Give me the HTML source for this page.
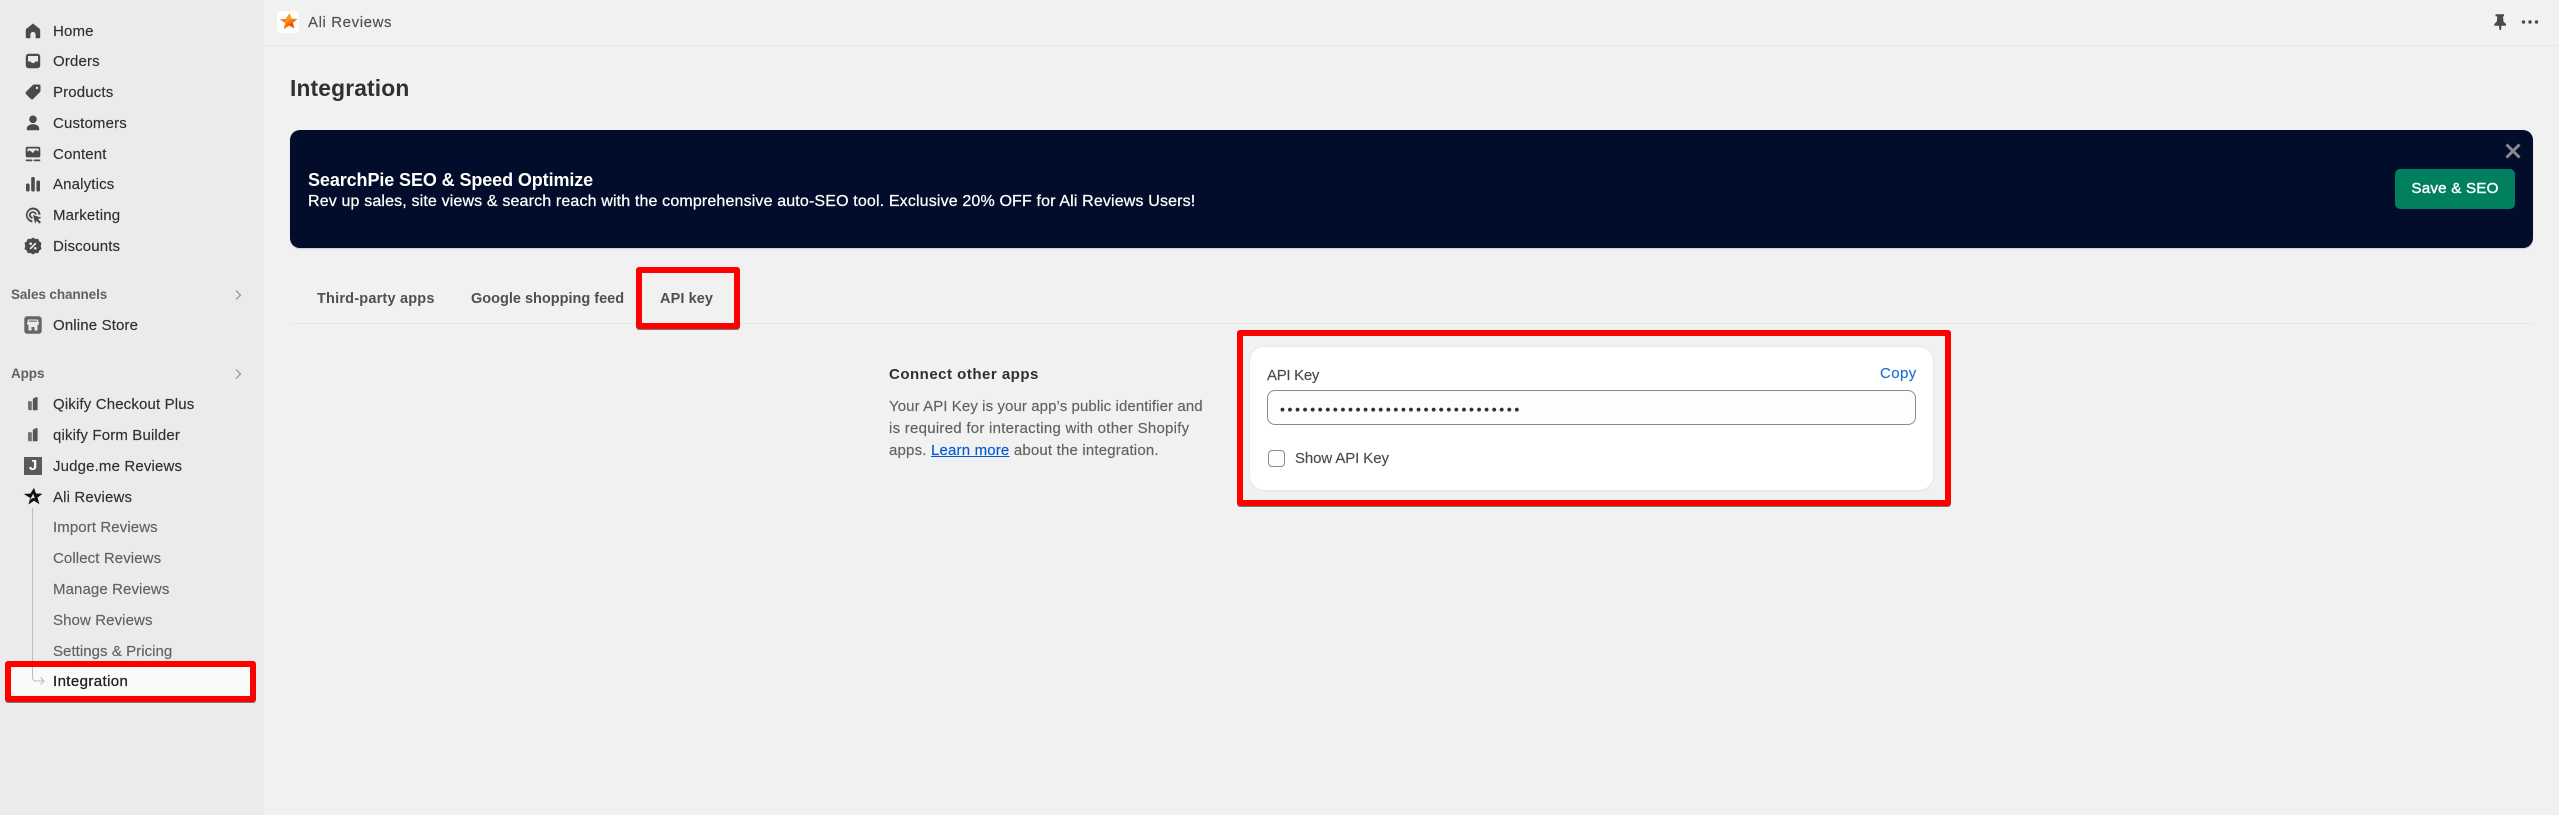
<!DOCTYPE html>
<html lang="en"><head><meta charset="utf-8"><title>Integration</title>
<style>
*{box-sizing:border-box}
html,body{margin:0;padding:0}
body{width:2559px;height:815px;overflow:hidden;background:#f1f1f1;position:relative;font-family:"Liberation Sans",sans-serif;color:#303030}
.a{position:absolute}
.t{position:absolute;white-space:nowrap;line-height:20px;height:20px;font-size:15px;letter-spacing:.15px;margin-top:1px;-webkit-text-stroke:.15px currentColor}
.n{left:53px;color:#303030}
.s{left:53px;color:#616161;letter-spacing:.1px}
.h{left:11px;color:#616161;font-weight:bold;font-size:13.500px;letter-spacing:-.1px;-webkit-text-stroke:0}
.tab{font-weight:bold;font-size:14.500px;color:#4f4f4f;letter-spacing:.1px;-webkit-text-stroke:0}
.p{left:889px;color:#616161}
svg.i{position:absolute;left:23px;width:20px;height:20px;fill:#4a4a4a}
.red{position:absolute;border:6px solid #f00;border-radius:3px;box-shadow:0 1px 0 #777}
</style></head><body>
<div class="a" style="left:0;top:0;width:264px;height:815px;background:#ebebeb"></div>
<div class="a" style="left:264px;top:45px;width:2295px;height:1px;background:#e8e8e8"></div>

<svg class="i" style="top:21px" viewBox="0 0 20 20"><path d="M10 2.500l6.600 5.200c.4.4.6.9.6 1.500V16c0 .8-.4 1.200-1.200 1.200h-3.400v-3.700a2.600 2.600 0 0 0-5.200 0v3.700H4c-.8 0-1.200-.4-1.200-1.200V9.200c0-.6.2-1.100.6-1.500z"/></svg>
<div class="t n" style="top:21px">Home</div>
<svg class="i" style="top:51px" viewBox="0 0 20 20"><path fill-rule="evenodd" d="M5.500 2.800h9a2.700 2.700 0 0 1 2.700 2.700v9a2.700 2.700 0 0 1-2.700 2.700h-9a2.700 2.700 0 0 1-2.700-2.700v-9a2.700 2.700 0 0 1 2.700-2.700zM5 5v5.500h2.800l.8 1.500h2.800l.8-1.500H15V5z"/></svg>
<div class="t n" style="top:51px">Orders</div>
<svg class="i" style="top:82px" viewBox="0 0 20 20"><path fill-rule="evenodd" d="M11.500 2.500h4.500A1.500 1.500 0 0 1 17.500 4v4.500c0 .8-.3 1.400-.8 1.900l-6.300 6.400a2 2 0 0 1-2.800 0l-4.400-4.400a2 2 0 0 1 0-2.800l6.400-6.300c.5-.5 1.100-.8 1.900-.8zM14 4.800a1.200 1.200 0 1 0 0 2.400 1.200 1.200 0 0 0 0-2.400z"/></svg>
<div class="t n" style="top:82px">Products</div>
<svg class="i" style="top:113px" viewBox="0 0 20 20"><circle cx="10" cy="6.300" r="3.800"/><path d="M3.800 17.200v-1.700c0-2.700 3.200-4.200 6.200-4.200s6.200 1.500 6.200 4.200v1.700z"/></svg>
<div class="t n" style="top:113px">Customers</div>
<svg class="i" style="top:144px" viewBox="0 0 20 20"><path fill-rule="evenodd" d="M4.500 2.800h11a1.800 1.800 0 0 1 1.800 1.800v7a1.800 1.800 0 0 1-1.800 1.800h-11a1.800 1.800 0 0 1-1.800-1.800v-7a1.800 1.800 0 0 1 1.800-1.800zM4.500 4.500v3.200l2.200-1.300 3.300 2.600 2.400-3.300 3.100 1.800V4.500z"/><rect x="2.700" y="15.500" width="6.800" height="1.700" rx=".7"/><rect x="10.800" y="15.500" width="6.500" height="1.700" rx=".7"/></svg>
<div class="t n" style="top:144px">Content</div>
<svg class="i" style="top:174px" viewBox="0 0 20 20"><rect x="3" y="9.500" width="3.600" height="8" rx="1.500"/><rect x="8.200" y="3" width="3.600" height="14.500" rx="1.500"/><rect x="13.400" y="6.500" width="3.600" height="11" rx="1.500"/></svg>
<div class="t n" style="top:174px">Analytics</div>
<svg class="i" style="top:205px" viewBox="0 0 20 20"><path d="M10 2.500a7.500 7.500 0 0 1 7.500 7.200h-2A5.500 5.500 0 1 0 9.300 15.400v2A7.500 7.500 0 0 1 10 2.500z"/><path d="M10 6.200a3.800 3.800 0 0 1 3.800 3.300h-2a2 2 0 1 0-2.300 2.400v2A3.800 3.800 0 0 1 10 6.200z"/><path d="M10 10l8.500 2.700-3.400 1.400 2.900 3-1.600 1.500-2.800-3-1.400 3.300z"/></svg>
<div class="t n" style="top:205px">Marketing</div>
<svg class="i" style="top:236px" viewBox="0 0 20 20"><path fill-rule="evenodd" d="M10 1.500l2.400 1.500 2.800-.2 1 2.600 2.300 1.600-.8 3 .8 3-2.300 1.600-1 2.600-2.800-.2-2.400 1.500-2.400-1.500-2.800.2-1-2.600L1.500 13l.8-3-.8-3 2.300-1.600 1-2.600 2.800.2zM12.300 6.500l-5.800 5.800 1.200 1.200 5.800-5.800zM7.700 6.400a1.300 1.300 0 1 0 0 2.600 1.300 1.300 0 0 0 0-2.600zM12.300 11a1.300 1.300 0 1 0 0 2.600 1.300 1.300 0 0 0 0-2.600z"/></svg>
<div class="t n" style="top:236px">Discounts</div>

<div class="t h" style="top:284px">Sales channels</div>
<svg class="a" style="left:233px;top:289px" width="10" height="12" viewBox="0 0 10 12" fill="none" stroke="#8f8f8f" stroke-width="1.200"><path d="M3 1.500L7.500 6 3 10.500"/></svg>
<svg class="i" style="top:315px" viewBox="0 0 20 20"><path fill-rule="evenodd" d="M4 1.300h12A2.700 2.700 0 0 1 18.700 4v12a2.700 2.700 0 0 1-2.700 2.700H4A2.700 2.700 0 0 1 1.300 16V4A2.700 2.700 0 0 1 4 1.300zM5.200 4.500L4 8.500c0 1 1 1.500 1.500 1.500V15.500h3V12h3v3.500h3V10c.5 0 1.500-.5 1.500-1.500l-1.200-4z" style="fill:#666"/><path d="M6 5.500h8v1.500H6z" style="fill:#888"/></svg>
<div class="t n" style="top:315px">Online Store</div>

<div class="t h" style="top:363px">Apps</div>
<svg class="a" style="left:233px;top:368px" width="10" height="12" viewBox="0 0 10 12" fill="none" stroke="#8f8f8f" stroke-width="1.200"><path d="M3 1.500L7.500 6 3 10.500"/></svg>
<svg class="i" style="top:394px" viewBox="0 0 20 20"><path d="M5 7.200h3.800v9H6.500A1.500 1.500 0 0 1 5 14.700z" style="fill:#707070"/><path d="M9.800 4.800l3.500-1.800c1 0 1.300.3 1.300 1.200v12h-4.800z" style="fill:#555"/></svg>
<div class="t n" style="top:394px">Qikify Checkout Plus</div>
<svg class="i" style="top:425px" viewBox="0 0 20 20"><path d="M5 7.200h3.800v9H6.500A1.500 1.500 0 0 1 5 14.700z" style="fill:#707070"/><path d="M9.800 4.800l3.500-1.800c1 0 1.300.3 1.300 1.200v12h-4.800z" style="fill:#555"/></svg>
<div class="t n" style="top:425px">qikify Form Builder</div>
<div class="a" style="left:24px;top:457px;width:18px;height:18px;background:#5a5a5a;color:#fff;font:bold 15px/18px 'Liberation Sans',sans-serif;text-align:center">J</div>
<div class="t n" style="top:456px">Judge.me Reviews</div>
<svg class="i" style="top:487px;fill:#111" viewBox="0 0 20 20"><path fill-rule="evenodd" d="M11 .8l2 5.700 6.500.2-5 3.900 1.900 6.700-5.400-3.600-5.500 3.800 1.700-6.500L.7 6.900l6.700-.3zM10.200 6.800L7 12.700l3.300-1.900 1.600 1z"/></svg>
<div class="t n" style="top:487px">Ali Reviews</div>
<div class="t s" style="top:517px">Import Reviews</div>
<div class="t s" style="top:548px">Collect Reviews</div>
<div class="t s" style="top:579px">Manage Reviews</div>
<div class="t s" style="top:610px">Show Reviews</div>
<div class="t s" style="top:641px;letter-spacing:.05px">Settings &amp; Pricing</div>

<div class="a" style="left:11px;top:667px;width:239px;height:29px;background:#fafafa;border-radius:8px 0 0 8px"></div>
<svg class="a" style="left:28px;top:506px" width="20" height="182" viewBox="0 0 20 182" fill="none" stroke="#bdbdbd" stroke-width="1"><path d="M4.500 2V171q0 4 4 4H16M12.500 171.500L16 175l-3.500 3.500"/></svg>
<div class="t n" style="top:671px;color:#1f1f1f;letter-spacing:.4px;-webkit-text-stroke:.3px #1f1f1f">Integration</div>
<div class="red" style="left:5px;top:661px;width:251px;height:41px"></div>

<div class="a" style="left:277px;top:11px;width:22px;height:22px;background:#fff;border-radius:4px"></div>
<svg class="a" style="left:277px;top:11px" width="22" height="22" viewBox="0 0 22 22"><path d="M12.500 2.500l2.300 5.200 5.700.3-4.600 4 1.600 5.800-5.400-3.100-5.400 3.500 1.700-6.200L2.500 8.300l6.200-.2z" fill="#f5760f"/><path d="M12.500 2.500L9.300 9l-2.500 7.500 4.900-7.600 8.800-.9-5.700-.3z" fill="#fb9a1c"/><path d="M7 16.500l4.700-3.300 5.300 3.100-1.200-4.500-4.700 1.400z" fill="#e8470b"/></svg>
<div class="t" style="left:308px;top:12px;color:#4f4f4f;letter-spacing:.6px">Ali Reviews</div>
<svg class="a" style="left:2490px;top:12px" width="20" height="20" viewBox="0 0 20 20" fill="#4a4a4a"><path d="M5.500 2.300h8.500v1.700l-1 .7.500 4.800 2.500 2.500v1.800h-4.500l-.5 4.200h-1.500l-.5-4.200H4.300V12l2.500-2.500.5-4.800-1.800-.7z"/></svg>
<svg class="a" style="left:2520px;top:18px" width="20" height="8" viewBox="0 0 20 8" fill="#4a4a4a"><circle cx="3.500" cy="4" r="1.700"/><circle cx="10" cy="4" r="1.700"/><circle cx="16.500" cy="4" r="1.700"/></svg>

<div class="t" style="left:290px;top:75px;height:24px;line-height:24px;font-size:22.800px;font-weight:bold;color:#303030;-webkit-text-stroke:0">Integration</div>

<div class="a" style="left:290px;top:130px;width:2243px;height:118px;background:#020d2b;border-radius:10px;box-shadow:0 1px 1px #ccc"></div>
<div class="t" style="left:308px;top:169px;font-size:18px;font-weight:bold;color:#fff;letter-spacing:-.1px;-webkit-text-stroke:0">SearchPie SEO &amp; Speed Optimize</div>
<div class="t" style="left:308px;top:191px;font-size:16px;color:#fff;letter-spacing:.15px;-webkit-text-stroke:.25px #fff">Rev up sales, site views &amp; search reach with the comprehensive auto-SEO tool. Exclusive 20% OFF for Ali Reviews Users!</div>
<svg class="a" style="left:2504px;top:142px" width="18" height="18" viewBox="0 0 18 18" stroke="#8a8a8a" stroke-width="3" fill="none"><path d="M2.500 2.500l13 13M15.500 2.500l-13 13"/></svg>
<div class="a" style="left:2395px;top:169px;width:120px;height:40px;border-radius:5px;background:#00805f;color:#fff;font-size:15.200px;line-height:40px;text-align:center;letter-spacing:.2px;-webkit-text-stroke:.4px #fff">Save &amp; SEO</div>

<div class="t tab" style="left:317px;top:288px;letter-spacing:.2px">Third-party apps</div>
<div class="t tab" style="left:471px;top:288px;letter-spacing:0">Google shopping feed</div>
<div class="t tab" style="left:660px;top:288px">API key</div>
<div class="a" style="left:290px;top:323px;width:2243px;height:1px;background:#e6e6e6"></div>
<div class="red" style="left:636px;top:267px;width:104px;height:62px"></div>

<div class="t" style="left:889px;top:364px;font-weight:bold;font-size:15px;color:#303030;letter-spacing:.5px;-webkit-text-stroke:0">Connect other apps</div>
<div class="t p" style="top:396px;letter-spacing:.09px">Your API Key is your app’s public identifier and</div>
<div class="t p" style="top:418px;letter-spacing:.26px">is required for interacting with other Shopify</div>
<div class="t p" style="top:440px;letter-spacing:.18px">apps. <span style="color:#005bd3;text-decoration:underline">Learn more</span> about the integration.</div>

<div class="a" style="left:1250px;top:347px;width:683px;height:143px;background:#fff;border-radius:14px;box-shadow:0 0 0 1px #e8e8e8,0 1px 1px #ccc"></div>
<div class="t" style="left:1267px;top:365px;color:#4a4a4a;letter-spacing:-.3px">API Key</div>
<div class="t" style="left:1880px;top:363px;color:#1a6fd9;letter-spacing:.4px">Copy</div>
<div class="a" style="left:1267px;top:390px;width:649px;height:35px;background:#fdfdfd;border:1px solid #8a8a8a;border-radius:8px"></div>
<div class="t" style="left:1280px;top:398px;font-size:14px;letter-spacing:2.660px;color:#303030">••••••••••••••••••••••••••••••••</div>
<div class="a" style="left:1268px;top:450px;width:17px;height:17px;background:#fdfdfd;border:1px solid #8a8a8a;border-radius:4px"></div>
<div class="t" style="left:1295px;top:448px;color:#4a4a4a;letter-spacing:-.1px">Show API Key</div>
<div class="red" style="left:1237px;top:330px;width:714px;height:176px"></div>
</body></html>
